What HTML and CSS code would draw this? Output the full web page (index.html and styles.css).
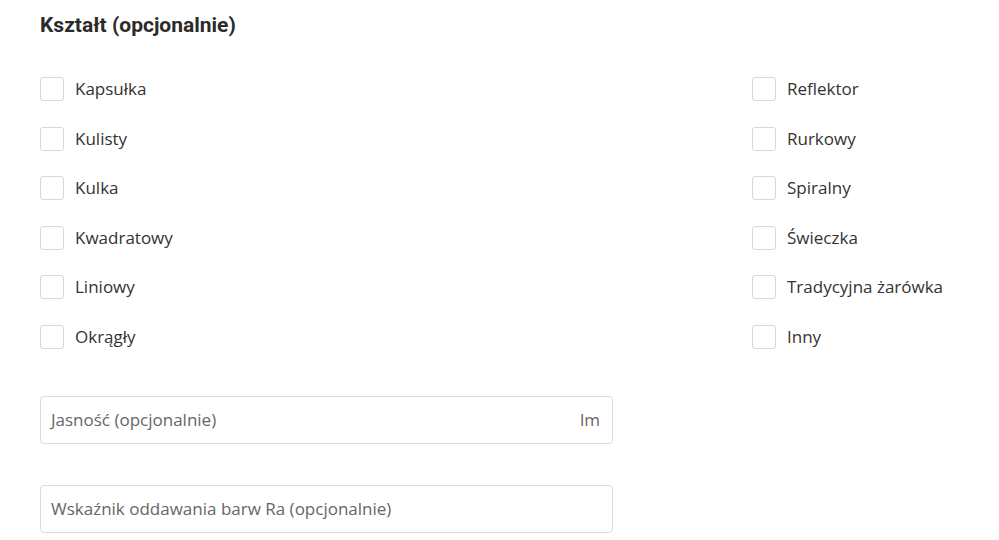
FILE: index.html
```html
<!DOCTYPE html>
<html lang="pl">
<head>
<meta charset="utf-8">
<link rel="stylesheet" href="styles.css">
</head>
<body>
<div class="page">
  <h2 class="title">Kształt (opcjonalnie)</h2>
  <div class="options">
    <div class="col">
      <label class="opt"><span class="box"></span><span class="lbl">Kapsułka</span></label>
      <label class="opt"><span class="box"></span><span class="lbl">Kulisty</span></label>
      <label class="opt"><span class="box"></span><span class="lbl">Kulka</span></label>
      <label class="opt"><span class="box"></span><span class="lbl">Kwadratowy</span></label>
      <label class="opt"><span class="box"></span><span class="lbl">Liniowy</span></label>
      <label class="opt"><span class="box"></span><span class="lbl">Okrągły</span></label>
    </div>
    <div class="col">
      <label class="opt"><span class="box"></span><span class="lbl">Reflektor</span></label>
      <label class="opt"><span class="box"></span><span class="lbl">Rurkowy</span></label>
      <label class="opt"><span class="box"></span><span class="lbl">Spiralny</span></label>
      <label class="opt"><span class="box"></span><span class="lbl">Świeczka</span></label>
      <label class="opt"><span class="box"></span><span class="lbl">Tradycyjna żarówka</span></label>
      <label class="opt"><span class="box"></span><span class="lbl">Inny</span></label>
    </div>
  </div>
  <div class="fields">
    <div class="field"><span class="ph">Jasność (opcjonalnie)</span><span class="unit">lm</span></div>
    <div class="field"><span class="ph">Wskaźnik oddawania barw Ra (opcjonalnie)</span></div>
  </div>
</div>
</body>
</html>
```
FILE: styles.css
```css
html, body { margin: 0; padding: 0; background: #fff; }
.page {
  padding: 11px 40px 0 40px;
  font-family: "Open Sans", "Liberation Sans", sans-serif;
  color: #333;
}
.title {
  margin: 0;
  font-family: Roboto, "Liberation Sans", sans-serif;
  font-weight: 700;
  font-size: 21px;
  line-height: 28px;
  color: #2b2b2b;
}
.options {
  display: grid;
  grid-template-columns: 712px 1fr;
  margin-top: 38px;
}
.col {
  display: flex;
  flex-direction: column;
  gap: 25.6px;
}
.opt {
  display: flex;
  align-items: center;
  gap: 11px;
  height: 24px;
}
.box {
  width: 22px;
  height: 22px;
  border: 1px solid #d8d8d8;
  border-radius: 3px;
  flex: none;
}
.lbl {
  font-size: 17px;
  line-height: 24px;
  color: #333;
}
.fields {
  display: flex;
  flex-direction: column;
  gap: 41px;
  margin-top: 47px;
  width: 573px;
}
.field {
  height: 46px;
  border: 1px solid #dcdcdc;
  border-radius: 4px;
  display: flex;
  align-items: center;
  justify-content: space-between;
  padding: 0 12px 0 10px;
  font-size: 17px;
  color: #666;
}
```
